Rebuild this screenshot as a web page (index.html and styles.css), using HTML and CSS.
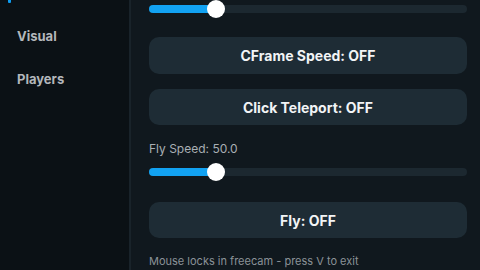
FILE: index.html
```html
<!DOCTYPE html>
<html lang="en">
<head>
    <meta charset="UTF-8">
    <title>Movement</title>
    <link rel="stylesheet" href="styles.css">
</head>
<body>
    <div class="window">
        <div class="sidebar">
            <div class="tab-indicator"></div>
            <div class="tab first">Visual</div>
            <div class="tab">Players</div>
        </div>

        <div class="content">
            <div class="slider">
                <div class="track">
                    <div class="fill" style="width: 21%"></div>
                    <div class="knob" style="left: 21%"></div>
                </div>
            </div>

            <button class="toggle first">CFrame Speed: OFF</button>
            <button class="toggle">Click Teleport: OFF</button>

            <div class="label">Fly Speed: 50.0</div>
            <div class="slider">
                <div class="track">
                    <div class="fill" style="width: 21%"></div>
                    <div class="knob" style="left: 21%"></div>
                </div>
            </div>

            <button class="toggle fly">Fly: OFF</button>
            <div class="note">Mouse locks in freecam - press V to exit</div>
        </div>
    </div>
</body>
</html>
```

FILE: styles.css
```css
* {
    margin: 0;
    padding: 0;
    box-sizing: border-box;
}

body {
    font-family: Inter, 'Noto Sans', sans-serif;
    background-color: #10181e;
    color: #f0f2f4;
    width: 480px;
    height: 270px;
    overflow: hidden;
}

.window {
    display: flex;
    height: 270px;
}

.sidebar {
    width: 131px;
    flex-shrink: 0;
    background-color: #0b1115;
    border-right: 2px solid #19232a;
}

.tab-indicator {
    width: 3px;
    height: 3px;
    margin-left: 8px;
    background-color: #0e9cf0;
    border-radius: 0 0 1px 1px;
}

.tab {
    height: 43px;
    display: flex;
    align-items: center;
    padding-left: 17px;
    font-size: 13px;
    font-weight: 700;
    color: #b3b7bb;
}

.tab.first {
    margin-top: 11px;
}

.content {
    flex: 1;
    padding: 0 13px 0 18px;
    display: flex;
    flex-direction: column;
}

.slider {
    height: 18px;
    display: flex;
    align-items: center;
}

.track {
    position: relative;
    width: 100%;
    height: 8px;
    border-radius: 4px;
    background-color: #1c2830;
}

.fill {
    height: 100%;
    border-radius: 4px;
    background-color: #12a2f2;
}

/* knob sits over the track */
.knob {
    position: absolute;
    top: -5px;
    width: 18px;
    height: 18px;
    margin-left: -9px;
    border-radius: 50%;
    background-color: #ffffff;
}

.toggle {
    height: 37px;
    border: none;
    border-radius: 10px;
    background-color: #1e2c35;
    color: #f2f4f6;
    font-family: inherit;
    font-size: 14px;
    font-weight: 700;
    margin-top: 15px;
}

.toggle.first {
    margin-top: 19px;
}

.label {
    margin-top: 16px;
    font-size: 12px;
    line-height: 16px;
    color: #a9afb4;
}

.label + .slider {
    margin-top: 6px;
}

.toggle.fly {
    margin-top: 21px;
    height: 36px;
}

.note {
    margin-top: 14px;
    font-size: 11px;
    line-height: 18px;
    color: #8b9298;
}
```
